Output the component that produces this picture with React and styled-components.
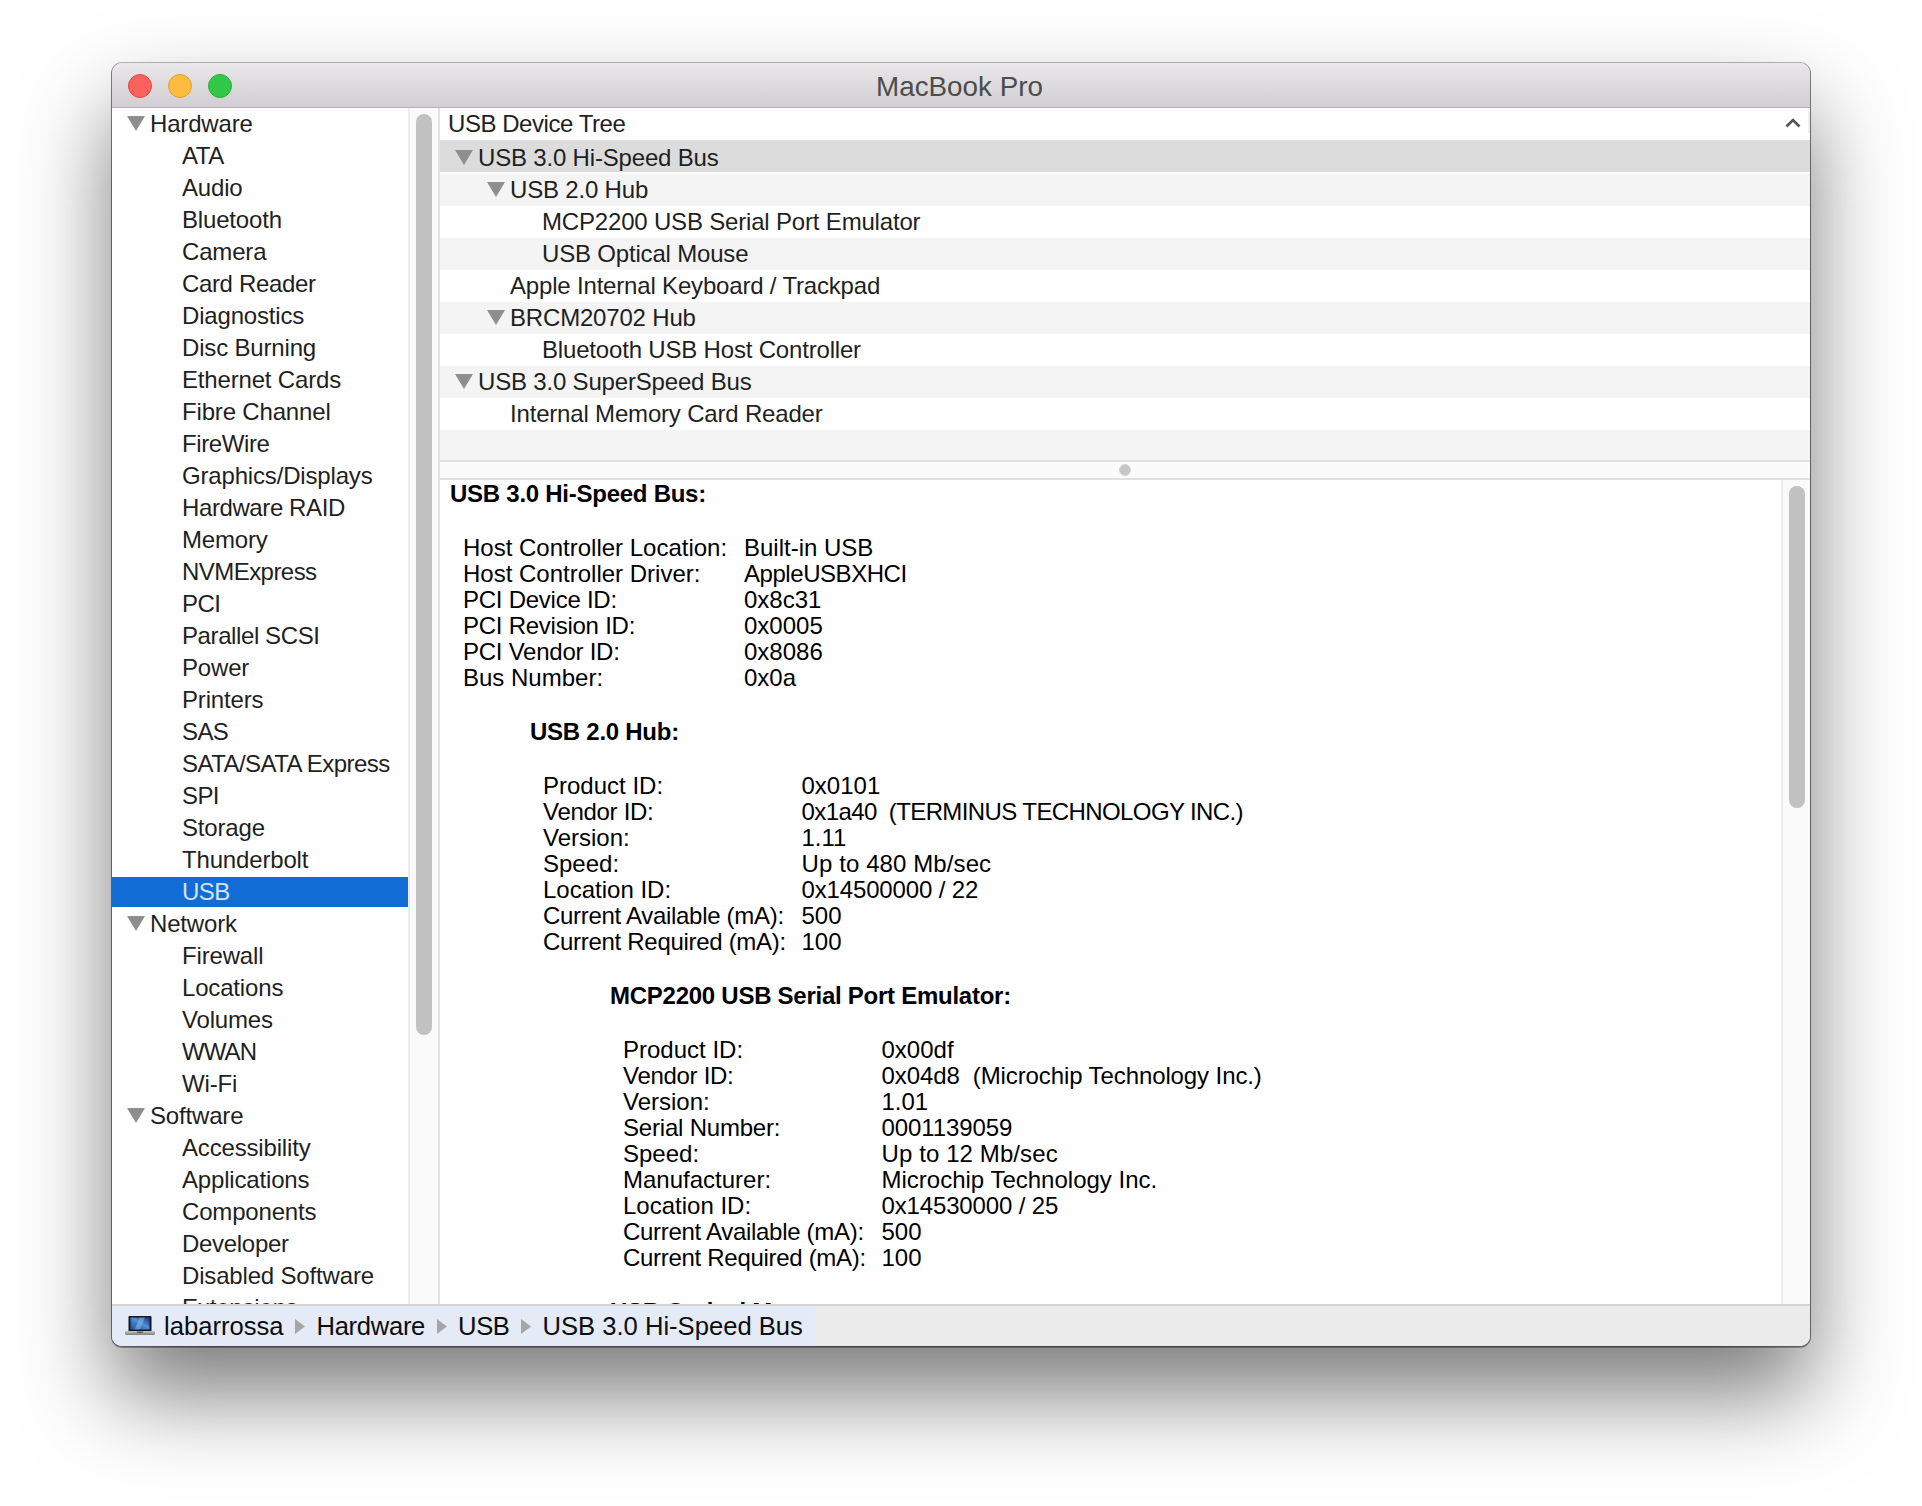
import React from "react";
import styled, { createGlobalStyle } from "styled-components";

const Global = createGlobalStyle`
  html, body { margin: 0; padding: 0; background: #fff; }
  body { font-family: "Liberation Sans", Arial, sans-serif; }
`;

const Page = styled.div`
  width: 1922px;
  height: 1506px;
  padding: 63px 0 0 112px;
  box-sizing: border-box;
  overflow: hidden;
  background: #fff;
`;
const Window = styled.div`
  width: 1698px;
  height: 1283px;
  display: flex;
  flex-direction: column;
  border-radius: 10px;
  overflow: hidden;
  background: #fff;
  box-shadow: 0 0 0 1px rgba(0, 0, 0, 0.27), 0 1px 0 1px rgba(0, 0, 0, 0.3), 0 48px 90px rgba(0, 0, 0, 0.52);
`;
const TitleBar = styled.header`
  flex: 0 0 45px;
  box-sizing: border-box;
  position: relative;
  display: flex;
  align-items: center;
  justify-content: center;
  background: linear-gradient(#e9e7e9, #d1cfd1);
  border-bottom: 1px solid #b4b2b4;
`;
const Lights = styled.div`
  position: absolute;
  left: 16px;
  top: 11px;
  display: flex;
  gap: 16px;
`;
const Light = styled.span`
  width: 24px;
  height: 24px;
  box-sizing: border-box;
  border-radius: 50%;
  background: ${(p) => p.$fill};
  border: 1px solid ${(p) => p.$edge};
`;
const WindowTitle = styled.h1`
  margin: 3px 3px 0 0;
  font-size: 27.8px;
  font-weight: 400;
  color: #4c4c4c;
  line-height: 32px;
`;
const Body = styled.div`
  flex: 1;
  min-height: 0;
  display: flex;
`;
const Sidebar = styled.nav`
  flex: 0 0 328px;
  box-sizing: border-box;
  display: flex;
  border-right: 2px solid #e2e2e2;
  overflow: hidden;
`;
const SideList = styled.ul`
  flex: 0 0 296px;
  margin: 0;
  padding: 0;
  list-style: none;
`;
const SideRow = styled.li`
  height: 32px;
  display: flex;
  align-items: center;
  box-sizing: border-box;
  padding-left: ${(p) => (p.$group ? 15 : 70)}px;
  font-size: 24px;
  letter-spacing: ${(p) => p.$track ?? -0.17}px;
  white-space: pre;
  color: ${(p) => (p.$selected ? "#d3e3fa" : "#1f1f1f")};
  background: ${(p) =>
    p.$selected ? "linear-gradient(#fff 1px, #116cd6 1px, #116cd6 31px, #fff 31px)" : "transparent"};
`;
const Triangle = styled.svg`
  flex: none;
  width: 18px;
  height: 15px;
  margin: -1px 5px 0 0;
  fill: #8e8e8e;
`;
const ScrollTrack = styled.div`
  flex: ${(p) => `0 0 ${p.$width}px`};
  box-sizing: border-box;
  padding: ${(p) => p.$top}px 0 0 6px;
  background: #fafafa;
  border-left: 2px solid #ececec;
`;
const ScrollThumb = styled.div`
  width: 16px;
  height: ${(p) => p.$height}px;
  border-radius: 8px;
  background: #c1c1c1;
`;
const Main = styled.main`
  flex: 1;
  min-width: 0;
  display: flex;
  flex-direction: column;
`;
const TreeHeader = styled.div`
  flex: 0 0 33px;
  box-sizing: border-box;
  display: flex;
  align-items: center;
  padding-left: 8px;
  font-size: 24px;
  letter-spacing: -0.45px;
  color: #1f1f1f;
  border-bottom: 1px solid #dedede;
`;
const HeaderLabel = styled.span`
  flex: 1;
`;
const Chevron = styled.svg`
  width: 16px;
  height: 11px;
  margin: -3px 7px 0 0;
  fill: none;
  stroke: #555;
  stroke-width: 2.6;
`;
const HeaderEdge = styled.span`
  width: 2px;
  height: 22px;
  margin-top: -4px;
  background: #eeeeee;
`;
const TreeList = styled.div`
  flex: 0 0 319px;
  display: flex;
  flex-direction: column;
`;
const TreeRow = styled.div`
  height: ${(p) => (p.$selected ? 33 : 32)}px;
  flex: none;
  display: flex;
  align-items: center;
  box-sizing: border-box;
  padding-left: ${(p) => 15 + p.$level * 32 + (p.$leaf ? 23 : 0)}px;
  font-size: 24px;
  letter-spacing: -0.18px;
  color: #1f1f1f;
  background: ${(p) => (p.$striped ? "#f4f4f4" : "#fff")};
  box-shadow: ${(p) => (p.$selected ? "inset 0 -2px 0 #fff" : "none")};
  ${(p) => p.$selected && "background: #dcdcdc;"}
`;
const TreeFiller = styled.div`
  flex: 1;
  background: #f4f4f4;
`;
const Splitter = styled.div`
  flex: 0 0 20px;
  box-sizing: border-box;
  display: flex;
  align-items: center;
  justify-content: center;
  background: #fbfbfb;
  border-top: 2px solid #e0e0e0;
  border-bottom: 2px solid #e0e0e0;
`;
const SplitterDot = styled.span`
  width: 12px;
  height: 12px;
  box-sizing: border-box;
  border-radius: 50%;
  background: #c6c6c6;
  border: 1px solid #d6d6d6;
`;
const DetailPane = styled.div`
  flex: 1;
  min-height: 0;
  display: flex;
`;
const DetailScroll = styled.div`
  flex: 1;
  min-width: 0;
  overflow: hidden;
  padding: 1px 0 0 10px;
  color: #000;
  font-size: 24px;
  line-height: 26px;
`;
const Section = styled.section`
  margin: 0 0 28px ${(p) => p.$indent}px;
`;
const SectionTitle = styled.h2`
  margin: 0 0 28px;
  font-size: 24px;
  line-height: 26px;
  font-weight: 700;
  letter-spacing: -0.26px;
`;
const Facts = styled.dl`
  margin: 0 0 0 13px;
  display: grid;
  grid-template-columns: ${(p) => p.$label}px 1fr;
  white-space: pre;
`;
const FactLabel = styled.dt`
  margin: 0;
  letter-spacing: ${(p) => p.$track || 0}px;
`;
const FactValue = styled.dd`
  margin: 0;
  letter-spacing: ${(p) => p.$track || 0}px;
`;
const StatusBar = styled.footer`
  flex: 0 0 42px;
  box-sizing: border-box;
  display: flex;
  background: #ebebeb;
  border-top: 2px solid #d4d4d4;
`;
const PathBar = styled.div`
  display: flex;
  align-items: center;
  padding: 0 12px 0 13px;
  background: #e4eaf6;
  font-size: 25.6px;
  color: #0c0c0c;
`;
const Laptop = styled.svg`
  width: 30px;
  height: 20px;
  margin-right: 9px;
`;
const Crumb = styled.span`
  line-height: 30px;
  letter-spacing: ${(p) => p.$track}px;
`;
const CrumbArrow = styled.svg`
  width: 10px;
  height: 15px;
  margin: 0 11.5px;
  fill: #a6a6a6;
`;

const hardware = ["ATA","Audio","Bluetooth","Camera","Card Reader","Diagnostics","Disc Burning","Ethernet Cards","Fibre Channel","FireWire","Graphics/Displays","Hardware RAID","Memory","NVMExpress","PCI","Parallel SCSI","Power","Printers","SAS","SATA/SATA Express","SPI","Storage","Thunderbolt","USB"];
const network = ["Firewall","Locations","Volumes","WWAN","Wi-Fi"];
const software = ["Accessibility","Applications","Components","Developer","Disabled Software","Extensions"];
const sideTracking = {
  "ATA": -0.4, "Card Reader": -0.35, "Hardware RAID": -0.4, "NVMExpress": -0.55,
  "PCI": -0.6, "Parallel SCSI": -0.4, "SAS": -0.6, "SATA/SATA Express": -0.55,
  "SPI": -0.6, "USB": -0.5, "WWAN": -0.9, "FireWire": -0.4, "Developer": -0.3,
};

const tree = [
  { t: "USB 3.0 Hi-Speed Bus", level: 0, open: true, selected: true },
  { t: "USB 2.0 Hub", level: 1, open: true, striped: true },
  { t: "MCP2200 USB Serial Port Emulator", level: 2 },
  { t: "USB Optical Mouse", level: 2, striped: true },
  { t: "Apple Internal Keyboard / Trackpad", level: 1 },
  { t: "BRCM20702 Hub", level: 1, open: true, striped: true },
  { t: "Bluetooth USB Host Controller", level: 2 },
  { t: "USB 3.0 SuperSpeed Bus", level: 0, open: true, striped: true },
  { t: "Internal Memory Card Reader", level: 1 },
];

const sections = [
  {
    title: "USB 3.0 Hi-Speed Bus:", indent: 0, label: 281,
    facts: [["Host Controller Location:","Built-in USB"],["Host Controller Driver:","AppleUSBXHCI", 0, -0.45],["PCI Device ID:","0x8c31", -0.25],["PCI Revision ID:","0x0005", -0.25],["PCI Vendor ID:","0x8086", -0.25],["Bus Number:","0x0a"]],
  },
  {
    title: "USB 2.0 Hub:", indent: 80, label: 258.5,
    facts: [["Product ID:","0x0101"],["Vendor ID:","0x1a40  (TERMINUS TECHNOLOGY INC.)", -0.3, -0.6],["Version:","1.11"],["Speed:","Up to 480 Mb/sec", 0, 0.1],["Location ID:","0x14500000 / 22", 0, -0.15],["Current Available (mA):","500", -0.3],["Current Required (mA):","100", -0.3]],
  },
  {
    title: "MCP2200 USB Serial Port Emulator:", indent: 160, label: 258.5,
    facts: [["Product ID:","0x00df"],["Vendor ID:","0x04d8  (Microchip Technology Inc.)", -0.3, -0.1],["Version:","1.01"],["Serial Number:","0001139059", -0.2, -0.1],["Speed:","Up to 12 Mb/sec", 0, 0.1],["Manufacturer:","Microchip Technology Inc."],["Location ID:","0x14530000 / 25", 0, -0.15],["Current Available (mA):","500", -0.3],["Current Required (mA):","100", -0.3]],
  },
  { title: "USB Optical Mouse:", indent: 160, label: 258.5, facts: [] },
];

const Down = () => (
  <Triangle viewBox="0 0 18 15"><path d="M0 0h18L9 15z" /></Triangle>
);

const Group = ({ name, items }) => (
  <>
    <SideRow $group><Down />{name}</SideRow>
    {items.map((i) => (
      <SideRow key={i} $selected={i === "USB"} $track={sideTracking[i]}>{i}</SideRow>
    ))}
  </>
);

const crumbs = [["labarrossa", 0], ["Hardware", -0.3], ["USB", -0.4], ["USB 3.0 Hi-Speed Bus", 0]];

export default function App() {
  return (
    <Page>
      <Global />
      <Window>
        <TitleBar>
          <Lights>
            <Light $fill="#fc615d" $edge="#e2473f" />
            <Light $fill="#fdbc40" $edge="#e09e2a" />
            <Light $fill="#34c84a" $edge="#2bac3b" />
          </Lights>
          <WindowTitle>MacBook Pro</WindowTitle>
        </TitleBar>
        <Body>
          <Sidebar>
            <SideList>
              <Group name="Hardware" items={hardware} />
              <Group name="Network" items={network} />
              <Group name="Software" items={software} />
            </SideList>
            <ScrollTrack $width={30} $top={6}>
              <ScrollThumb $height={921} />
            </ScrollTrack>
          </Sidebar>
          <Main>
            <TreeHeader>
              <HeaderLabel>USB Device Tree</HeaderLabel>
              <Chevron viewBox="0 0 16 11"><path d="M1.5 9.5L8 3l6.5 6.5" /></Chevron>
              <HeaderEdge />
            </TreeHeader>
            <TreeList>
              {tree.map((r) => (
                <TreeRow key={r.t} $level={r.level} $leaf={!r.open} $striped={r.striped} $selected={r.selected}>
                  {r.open && <Down />}
                  {r.t}
                </TreeRow>
              ))}
              <TreeFiller />
            </TreeList>
            <Splitter><SplitterDot /></Splitter>
            <DetailPane>
              <DetailScroll>
                {sections.map((s) => (
                  <Section key={s.title} $indent={s.indent}>
                    <SectionTitle>{s.title}</SectionTitle>
                    <Facts $label={s.label}>
                      {s.facts.map(([k, v, kt, vt]) => (
                        <React.Fragment key={k}>
                          <FactLabel $track={kt}>{k}</FactLabel>
                          <FactValue $track={vt}>{v}</FactValue>
                        </React.Fragment>
                      ))}
                    </Facts>
                  </Section>
                ))}
              </DetailScroll>
              <ScrollTrack $width={29} $top={6}>
                <ScrollThumb $height={322} />
              </ScrollTrack>
            </DetailPane>
          </Main>
        </Body>
        <StatusBar>
          <PathBar>
            <Laptop viewBox="0 0 30 20">
              <defs>
                <linearGradient id="lapScreen" x1="0" y1="1" x2="1" y2="0">
                  <stop offset="0" stopColor="#1b4f9c" />
                  <stop offset="0.55" stopColor="#4f8fd8" />
                  <stop offset="1" stopColor="#123a78" />
                </linearGradient>
                <linearGradient id="lapBase" x1="0" y1="0" x2="0" y2="1">
                  <stop offset="0" stopColor="#c9c9c9" />
                  <stop offset="1" stopColor="#7c7c7c" />
                </linearGradient>
              </defs>
              <path d="M4.5 0h21a1 1 0 0 1 1 1v14h-23V1a1 1 0 0 1 1-1z" fill="#15171c" />
              <path d="M5.5 1.5h19v12h-19z" fill="url(#lapScreen)" />
              <path d="M15 1.5h5l-5.5 12h-5z" fill="#9cc3ee" opacity="0.45" />
              <path d="M0 15h30v2.5a1.5 1.5 0 0 1-1.5 1.5h-27A1.5 1.5 0 0 1 0 17.5z" fill="url(#lapBase)" />
              <path d="M12 15.5h6v1.5h-6z" fill="#5c5c5c" />
            </Laptop>
            {crumbs.map(([c, track], i) => (
              <React.Fragment key={c}>
                {i > 0 && <CrumbArrow viewBox="0 0 10 15"><path d="M0 0l10 7.5L0 15z" /></CrumbArrow>}
                <Crumb $track={track}>{c}</Crumb>
              </React.Fragment>
            ))}
          </PathBar>
        </StatusBar>
      </Window>
    </Page>
  );
}
